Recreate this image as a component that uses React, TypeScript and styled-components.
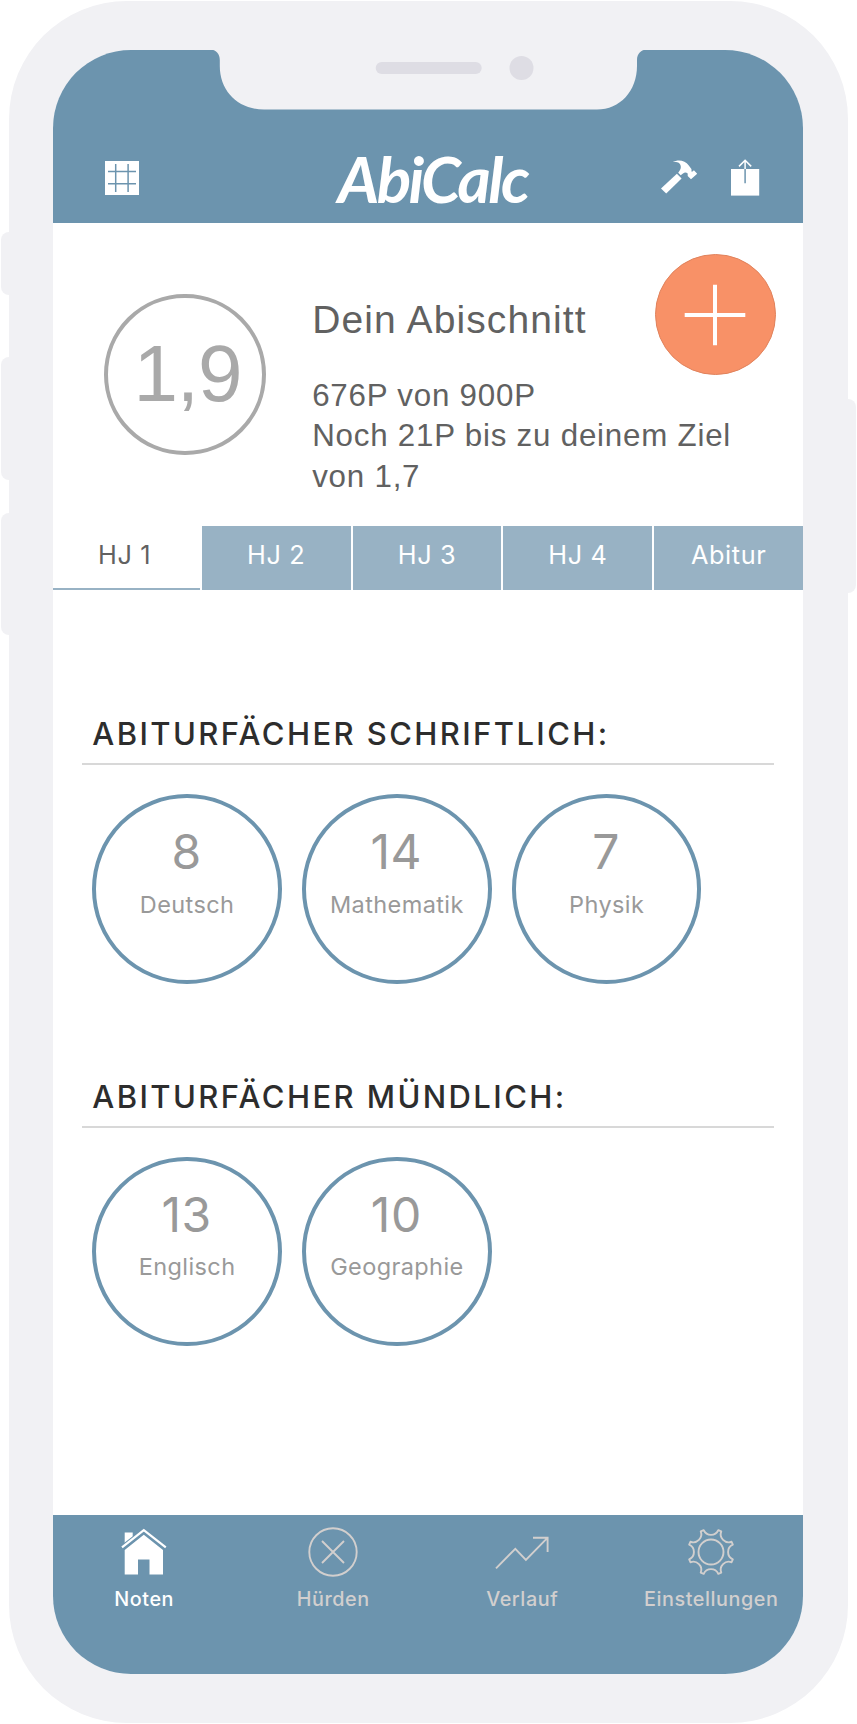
import React from 'react';
import styled, { createGlobalStyle } from 'styled-components';

const blue = '#6c94ae';
const paleBlue = '#98b2c4';
const frame = '#f1f1f4';
const muted = '#d2cfce';

const GlobalStyle = createGlobalStyle`
  * { box-sizing: border-box; }
  body { margin: 0; background: #fff; font-family: Inter, sans-serif; }
`;

const Stage = styled.div`
  position: relative;
  width: 857px;
  height: 1724px;
  padding: 1px 9px;
  overflow: hidden;
`;

const SideButton = styled.div<{ $side: 'left' | 'right'; $top: number; $length: number }>`
  position: absolute;
  ${({ $side }) => $side}: 1px;
  top: ${({ $top }) => $top}px;
  width: 30px;
  height: ${({ $length }) => $length}px;
  border-radius: 8px;
  background: ${frame};
`;

const Device = styled.div`
  position: relative;
  width: 839px;
  height: 1722px;
  padding: 48.6px 44.9px 49px 44.3px;
  border-radius: 118px;
  background: ${frame};
`;

const Screen = styled.div`
  display: flex;
  flex-direction: column;
  width: 100%;
  height: 100%;
  border-radius: 78px;
  overflow: hidden;
  background: #fff;
`;

const Notch = styled.svg`
  position: absolute;
  left: 201px;
  top: 48px;
  width: 437px;
  height: 62px;
`;

const Header = styled.header`
  display: flex;
  flex: none;
  align-items: flex-start;
  justify-content: space-between;
  height: 173.7px;
  padding: 96px 43px 0 51.7px;
  background: ${blue};
`;

const HeaderSide = styled.div<{ $end?: boolean }>`
  display: flex;
  width: 110px;
  padding-top: ${({ $end }) => ($end ? 13.5 : 15.5)}px;
  gap: 32px;
  justify-content: ${({ $end }) => ($end ? 'flex-end' : 'flex-start')};
`;

const Logo = styled.h1`
  margin: 0;
  width: 220px;
  text-align: center;
  font: italic 700 64px/66px Lato, sans-serif;
  letter-spacing: -2.6px;
  color: #fff;
`;

const Summary = styled.section`
  position: relative;
  display: flex;
  flex: none;
  gap: 46.5px;
  height: 302.3px;
  padding: 70.5px 0 0 51px;
  color: #616161;
  font-family: 'Liberation Sans', sans-serif;
`;

const Grade = styled.div`
  display: flex;
  flex: none;
  align-items: center;
  justify-content: center;
  width: 161.4px;
  height: 161.4px;
  padding: 0 0 1px 5px;
  border: 4px solid #a9a9a9;
  border-radius: 50%;
  color: #a9a9a9;
  font-size: 80px;
  line-height: 80px;
  letter-spacing: -1px;
`;

const SummaryText = styled.div`
  width: 440px;
  padding-top: 3px;
`;

const SummaryTitle = styled.h2`
  margin: 0 0 33px;
  font-size: 39px;
  font-weight: 400;
  line-height: 46px;
  letter-spacing: 1.1px;
`;

const SummaryLine = styled.p`
  margin: 0;
  font-size: 31.3px;
  line-height: 40.5px;
  letter-spacing: 0.78px;
`;

const AddButton = styled.button`
  position: absolute;
  top: 30.5px;
  right: 27.5px;
  display: flex;
  align-items: center;
  justify-content: center;
  width: 121px;
  height: 121px;
  padding: 2px 0 0;
  border: 1.5px solid #e0835d;
  border-radius: 50%;
  background: #f89167;
`;

const Tabs = styled.nav`
  display: flex;
  flex: none;
  height: 64.5px;
`;

const Tab = styled.div<{ $active?: boolean }>`
  display: flex;
  flex: ${({ $active }) => ($active ? '0 0 146.5px' : '1 1 0')};
  align-items: center;
  justify-content: center;
  padding-bottom: ${({ $active }) => ($active ? 4.5 : 6.5)}px;
  padding-right: ${({ $active }) => ($active ? 4 : 0)}px;
  border-left: ${({ $active }) => ($active ? 0 : 2)}px solid #fff;
  border-bottom: ${({ $active }) => ($active ? `2px solid ${paleBlue}` : '0')};
  background: ${({ $active }) => ($active ? '#fff' : paleBlue)};
  color: ${({ $active }) => ($active ? '#616161' : '#fff')};
  font-size: 25.3px;
  letter-spacing: 0.6px;
`;

const Content = styled.main`
  display: flex;
  flex: 1;
  flex-direction: column;
  padding: 124px 29px 0;
`;

const SubjectGroup = styled.section`
  height: 362.7px;
`;

const GroupTitle = styled.h3`
  height: 51.4px;
  margin: 0 0 28.6px;
  padding-left: 10px;
  border-bottom: 2px solid #d8d8d8;
  color: #2d2d2d;
  font-size: 31px;
  font-weight: 450;
  line-height: 40px;
  letter-spacing: 2.4px;
  white-space: nowrap;
`;

const SubjectRow = styled.div`
  display: flex;
  gap: 20.2px;
  padding-left: 10px;
`;

const Subject = styled.div`
  width: 189.6px;
  height: 189.6px;
  padding-top: 30px;
  border: 4px solid ${blue};
  border-radius: 50%;
  color: #999;
  text-align: center;
`;

const Points = styled.div`
  padding-right: 1px;
  font-size: 48px;
  line-height: 48px;
  letter-spacing: 0.6px;
`;

const SubjectName = styled.div`
  margin-top: 13.5px;
  font-size: 23.5px;
  line-height: 30px;
  letter-spacing: 0.4px;
`;

const BottomBar = styled.nav`
  display: flex;
  flex: none;
  justify-content: center;
  height: 159.4px;
  padding: 12.5px 1px 0 0;
  background: ${blue};
`;

const BarItem = styled.div<{ $active?: boolean }>`
  display: flex;
  flex: 0 0 189px;
  flex-direction: column;
  align-items: center;
  gap: 7.5px;
  color: ${({ $active }) => ($active ? '#fff' : muted)};
  font-size: 19.8px;
  font-weight: 500;
  line-height: 28px;
  letter-spacing: 0.55px;
`;

const GridIcon = () => (
  <svg width="34" height="34" viewBox="0 0 34 34">
    <rect width="34" height="34" fill="#fff" />
    <path d="M10.7 3v28M23.1 3v28M3 10.6h28M3 22.8h28" stroke={blue} strokeWidth="1.5" />
  </svg>
);

const HammerIcon = () => (
  <svg width="38" height="36" viewBox="0 0 38 36">
    <path
      fill="#fff"
      d="M12.7 3C18 .2 25 1 28.8 6.4L31.4 10c.3 1 .2 1.7-.1 2.4l1.3.2 1.3-1.3L37.2 14.7 31 20.3l-3.3-3.3v-2.5c-1.5-1.4-3.2-1.4-4.7.1l-2.3 1.7-2.5-2.6c3.2-3.4 3.5-7.1.8-9.6C17.5 2.7 15 2.8 12.7 3Z"
    />
    <path fill="#fff" d="M16.9 14.8l4.7 4.7L6.2 34.4 1 29.4Z" />
  </svg>
);

const ShareIcon = () => (
  <svg width="30" height="37" viewBox="0 0 30 37">
    <rect x="1" y="10" width="28.2" height="26.6" fill="#fff" />
    <path d="M15.1 1.5V11M9 7.4l6.1-6.2 6.1 6.2" fill="none" stroke="#fff" strokeWidth="1.5" />
    <path d="M15.1 10v14.3" stroke={blue} strokeWidth="1.5" />
  </svg>
);

const PlusIcon = () => (
  <svg width="62" height="62" viewBox="0 0 62 62">
    <path d="M31 .7v60.6M.7 31h60.6" stroke="#fff" strokeWidth="4" />
  </svg>
);

const HouseIcon = () => (
  <svg width="50" height="50" viewBox="0 0 50 50">
    <path d="M5.7 18V5.5h8v5.7Z" fill="#fff" />
    <path d="M3 20.7L24.8 4l22 16.7" fill="none" stroke={blue} strokeWidth="5" />
    <path d="M3 20.3L24.8 3.2l22 17.1" fill="none" stroke="#fff" strokeWidth="2.2" />
    <path d="M24.8 7.8L44 23v24.500H30.5v-15H19v15H5.700V23Z" fill="#fff" />
  </svg>
);

const CrossIcon = () => (
  <svg width="50" height="50" viewBox="0 0 50 50" fill="none" stroke="currentColor" strokeWidth="1.9">
    <circle cx="25" cy="25" r="23.7" />
    <path d="M14 14l22 22M36 14L14 36" />
  </svg>
);

const TrendIcon = () => (
  <svg width="56" height="50" viewBox="0 0 56 50" fill="none" stroke="currentColor" strokeWidth="1.9">
    <path d="M2 41.3l19.3-19.5 10.6 11L53.2 11.2M39 10.8h14.6V25" />
  </svg>
);

const toothPoint = (angle: number) => {
  const a = (angle * Math.PI) / 180;
  return `${(25 + 23 * Math.sin(a)).toFixed(2)} ${(25 - 23 * Math.cos(a)).toFixed(2)}`;
};

const gearOutline =
  Array.from({ length: 8 }, (_, i) => {
    const start = toothPoint(i * 45 - 18.5);
    const end = toothPoint(i * 45 + 18.5);
    return `${i === 0 ? 'M' : 'L'}${start}A8 8 0 0 0 ${end}`;
  }).join('') + 'Z';

const GearIcon = () => (
  <svg width="50" height="50" viewBox="0 0 50 50" fill="none" stroke="currentColor" strokeWidth="1.9">
    <path d={gearOutline} strokeLinejoin="round" />
    <circle cx="25" cy="25" r="12.5" />
  </svg>
);

const groups = [
  {
    title: 'ABITURFÄCHER SCHRIFTLICH:',
    subjects: [
      { name: 'Deutsch', points: 8 },
      { name: 'Mathematik', points: 14 },
      { name: 'Physik', points: 7 },
    ],
  },
  {
    title: 'ABITURFÄCHER MÜNDLICH:',
    subjects: [
      { name: 'Englisch', points: 13 },
      { name: 'Geographie', points: 10 },
    ],
  },
];

const terms = ['HJ 1', 'HJ 2', 'HJ 3', 'HJ 4', 'Abitur'];

const barItems = [
  { label: 'Noten', Icon: HouseIcon },
  { label: 'Hürden', Icon: CrossIcon },
  { label: 'Verlauf', Icon: TrendIcon },
  { label: 'Einstellungen', Icon: GearIcon },
];

export default function App() {
  return (
    <>
      <GlobalStyle />
      <Stage>
        <SideButton $side="left" $top={232} $length={63} />
        <SideButton $side="left" $top={357} $length={123} />
        <SideButton $side="left" $top={513} $length={122} />
        <SideButton $side="right" $top={399} $length={194} />
        <Device>
          <Screen>
            <Header>
              <HeaderSide>
                <GridIcon />
              </HeaderSide>
              <Logo>AbiCalc</Logo>
              <HeaderSide $end>
                <HammerIcon />
                <ShareIcon />
              </HeaderSide>
            </Header>
            <Summary>
              <Grade>1,9</Grade>
              <SummaryText>
                <SummaryTitle>Dein Abischnitt</SummaryTitle>
                <SummaryLine>676P von 900P</SummaryLine>
                <SummaryLine>Noch 21P bis zu deinem Ziel von 1,7</SummaryLine>
              </SummaryText>
              <AddButton aria-label="Hinzufügen">
                <PlusIcon />
              </AddButton>
            </Summary>
            <Tabs>
              {terms.map((term, i) => (
                <Tab key={term} $active={i === 0}>
                  {term}
                </Tab>
              ))}
            </Tabs>
            <Content>
              {groups.map(({ title, subjects }) => (
                <SubjectGroup key={title}>
                  <GroupTitle>{title}</GroupTitle>
                  <SubjectRow>
                    {subjects.map(({ name, points }) => (
                      <Subject key={name}>
                        <Points>{points}</Points>
                        <SubjectName>{name}</SubjectName>
                      </Subject>
                    ))}
                  </SubjectRow>
                </SubjectGroup>
              ))}
            </Content>
            <BottomBar>
              {barItems.map(({ label, Icon }, i) => (
                <BarItem key={label} $active={i === 0}>
                  <Icon />
                  {label}
                </BarItem>
              ))}
            </BottomBar>
          </Screen>
          <Notch viewBox="0 0 437 62">
            <path
              d="M0 0H437V.6C431 .6 427 5 427 11V17C427 42 410 60.500 387 60.500H54C28 60.500 9.800 42 9.800 17V11C9.800 5 6 .6 0 .6Z"
              fill={frame}
            />
            <rect x="165.700" y="13" width="106" height="12" rx="6" fill="#dedde4" />
            <circle cx="311.500" cy="19" r="12" fill="#dedde4" />
          </Notch>
        </Device>
      </Stage>
    </>
  );
}
